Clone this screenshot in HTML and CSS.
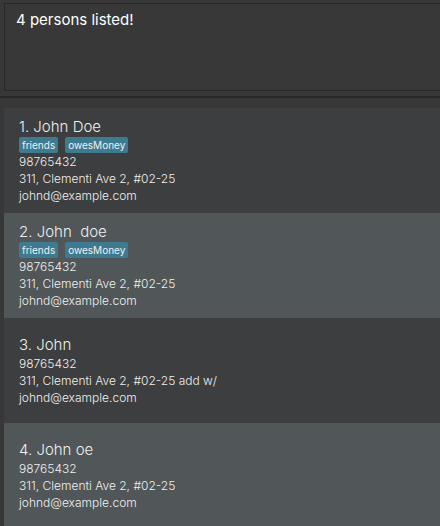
FILE: index.html
```html
<!DOCTYPE html>
<html lang="en">
<head>
<meta charset="utf-8">
<title>Address Book</title>
<link rel="stylesheet" href="styles.css">
</head>
<body>
<section class="result">
  <output class="result-display">4 persons listed!</output>
</section>
<main class="persons">
  <ol class="person-list">
    <li class="person">
      <h2 class="name">1. John Doe</h2>
      <div class="tags"><span class="tag">friends</span><span class="tag">owesMoney</span></div>
      <p class="detail">98765432</p>
      <p class="detail">311, Clementi Ave 2, #02-25</p>
      <p class="detail">johnd@example.com</p>
    </li>
    <li class="person">
      <h2 class="name">2. John  doe</h2>
      <div class="tags"><span class="tag">friends</span><span class="tag">owesMoney</span></div>
      <p class="detail">98765432</p>
      <p class="detail">311, Clementi Ave 2, #02-25</p>
      <p class="detail">johnd@example.com</p>
    </li>
    <li class="person">
      <h2 class="name">3. John</h2>
      <p class="detail">98765432</p>
      <p class="detail">311, Clementi Ave 2, #02-25 add w/</p>
      <p class="detail">johnd@example.com</p>
    </li>
    <li class="person">
      <h2 class="name">4. John oe</h2>
      <p class="detail">98765432</p>
      <p class="detail">311, Clementi Ave 2, #02-25</p>
      <p class="detail">johnd@example.com</p>
    </li>
  </ol>
</main>
</body>
</html>
```

FILE: styles.css
```css
* {
  box-sizing: border-box;
}

body {
  display: flex;
  flex-direction: column;
  height: 100vh;
  margin: 0;
  overflow: hidden;
  background: #383838;
  color: #f0f0f0;
  font-family: Inter, "Liberation Sans", sans-serif;
}

.result {
  padding: 3px 0 5px 4px;
  border-bottom: 2px solid #2a2a2a;
}

.result-display {
  display: block;
  min-height: 88px;
  padding: 6px 11px;
  border: 1px solid #282828;
  border-right: 0;
  color: #ffffff;
  font-size: 15px;
  line-height: 20px;
}

.persons {
  flex: 1;
  min-height: 0;
  padding: 10px 0 0 4px;
  overflow: hidden;
}

.person-list {
  margin: 0;
  padding: 0;
  list-style: none;
}

.person {
  display: flex;
  flex-direction: column;
  justify-content: center;
  min-height: 105px;
  padding: 8px 15px;
  background: #3c3e3f;
}

.person:nth-child(even) {
  background: #515658;
}

.name {
  margin: 0;
  font-size: 15px;
  font-weight: 300;
  line-height: 20px;
  white-space: pre-wrap;
}

.tags {
  display: flex;
  gap: 7px;
}

.tag {
  padding: 0 3px;
  border-radius: 2px;
  background: #3e7b91;
  font-size: 10px;
  line-height: 16px;
}

.detail {
  margin: 0;
  font-size: 12px;
  font-weight: 300;
  line-height: 17px;
}
```
